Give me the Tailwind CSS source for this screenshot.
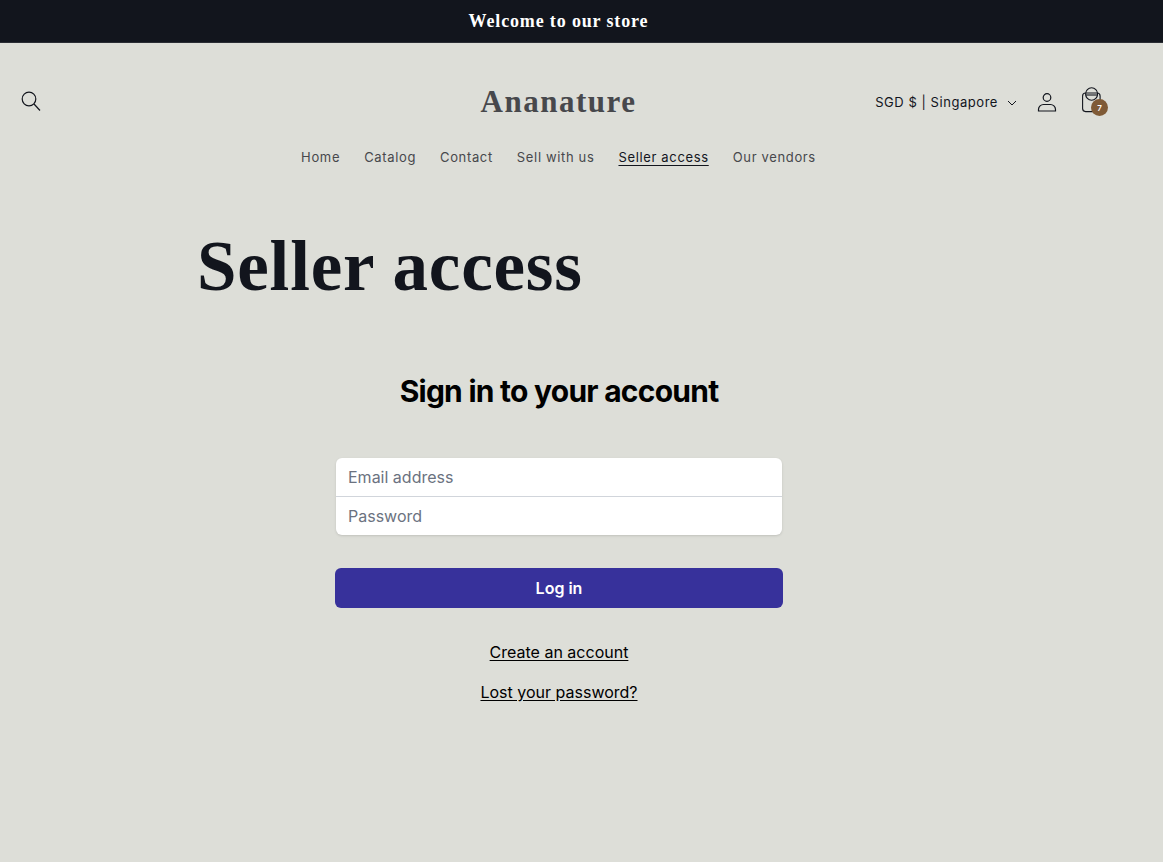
<!DOCTYPE html>
<html lang="en">
<head>
    <meta charset="UTF-8">
    <meta name="viewport" content="width=device-width, initial-scale=1.0">
    <title>Seller access - Ananature</title>
    <script src="https://cdn.jsdelivr.net/npm/@tailwindcss/browser@4"></script>
</head>
<body class="bg-[#dddeD8] min-h-[862px] font-['Inter',sans-serif] overflow-hidden">
    <!-- announcement -->
    <div class="h-[43px] bg-[#12151d] border-b border-[#2a2d34]">
        <p class="w-[1117px] h-[42px] flex justify-center items-center font-['Liberation_Serif',serif] font-bold text-white text-[18px] tracking-[0.85px]">Welcome to our store</p>
    </div>

    <div class="w-[1117px]">
        <!-- header -->
        <header class="h-[118px] pl-[20px] pr-[15px] flex items-center justify-between relative">
            <button class="w-[22px] h-[22px] text-[#12151d]" aria-label="Search">
                <svg viewBox="0 0 22 22" fill="none" stroke="currentColor" stroke-width="1.2" class="w-[22px] h-[22px]">
                    <circle cx="9" cy="8" r="6.800"/>
                    <path d="M14 13l6 6.500"/>
                </svg>
            </button>
            <p class="absolute left-0 right-0 text-center font-['Liberation_Serif',serif] font-bold text-[31px] tracking-[1.5px] text-[#47484c] pointer-events-none">Ananature</p>
            <div class="flex items-center">
                <span class="mt-[2px] text-[13px] tracking-[0.55px] text-[#12151d]">SGD $ | Singapore</span>
                <svg viewBox="0 0 10 6" fill="none" stroke="#12151d" stroke-width="1" class="w-[10px] h-[6px] ml-[9px] mt-[1px]"><path d="M1 1l4 4 4-4"/></svg>
                <svg viewBox="0 0 20 20" fill="none" stroke="#12151d" stroke-width="1.200" class="w-[20px] h-[20px] ml-[20px]">
                    <circle cx="10" cy="5.500" r="3.800"/>
                    <path d="M1.500 19v-1.500c0-3 2.500-5 5-5h7c2.500 0 5 2 5 5V19z"/>
                </svg>
                <div class="relative ml-[25px] w-[20px] h-[30px]">
                    <svg viewBox="0 0 20 30" fill="none" stroke="#12151d" stroke-width="1.100" class="w-[20px] h-[30px]">
                        <rect x="0.600" y="6" width="17.500" height="18.600" rx="3"/>
                        <ellipse cx="9.600" cy="7" rx="6" ry="6.300"/>
                        <path d="M3.600 8h12"/>
                    </svg>
                    <span class="absolute left-[9px] top-[12px] w-[17px] h-[17px] rounded-full bg-[#7f5a36] text-white text-[8px] font-semibold flex items-center justify-center">7</span>
                </div>
            </div>
        </header>

        <!-- nav -->
        <nav class="h-[36px] -mt-[21px] flex justify-center items-center gap-[24px] text-[13px] tracking-[0.65px] text-[#47484c]">
            <a href="#">Home</a>
            <a href="#">Catalog</a>
            <a href="#">Contact</a>
            <a href="#">Sell with us</a>
            <a href="#" class="text-[#12151d] underline underline-offset-[3px] decoration-1">Seller access</a>
            <a href="#">Our vendors</a>
        </nav>

        <main class="w-[724px] ml-[197px]">
            <h1 class="mt-[50px] font-['Liberation_Serif',serif] font-bold text-[71px] leading-[80px] tracking-[0.8px] text-[#12151d]">Seller access</h1>

            <section class="w-[448px] ml-[138px] mt-[67px]">
                <h2 class="text-center font-bold text-[30px] leading-[36px] tracking-[-0.75px] text-black">Sign in to your account</h2>
                <div class="mt-[49px] bg-white rounded-[6px] shadow-sm mx-[1px] text-[16px] text-[#6b7280]">
                    <p class="h-[39px] px-[12px] flex items-center border-b border-[#d1d5db]">Email address</p>
                    <p class="h-[38px] px-[12px] flex items-center">Password</p>
                </div>
                <button class="mt-[33px] w-full h-[40px] rounded-[6px] bg-[#37319b] text-white text-[16px] font-semibold">Log in</button>
                <div class="mt-[34px] flex flex-col items-center gap-[19px] text-[16px] leading-[21px] text-black">
                    <a href="#" class="underline underline-offset-2">Create an account</a>
                    <a href="#" class="underline underline-offset-2">Lost your password?</a>
                </div>
            </section>
        </main>
    </div>
</body>
</html>
